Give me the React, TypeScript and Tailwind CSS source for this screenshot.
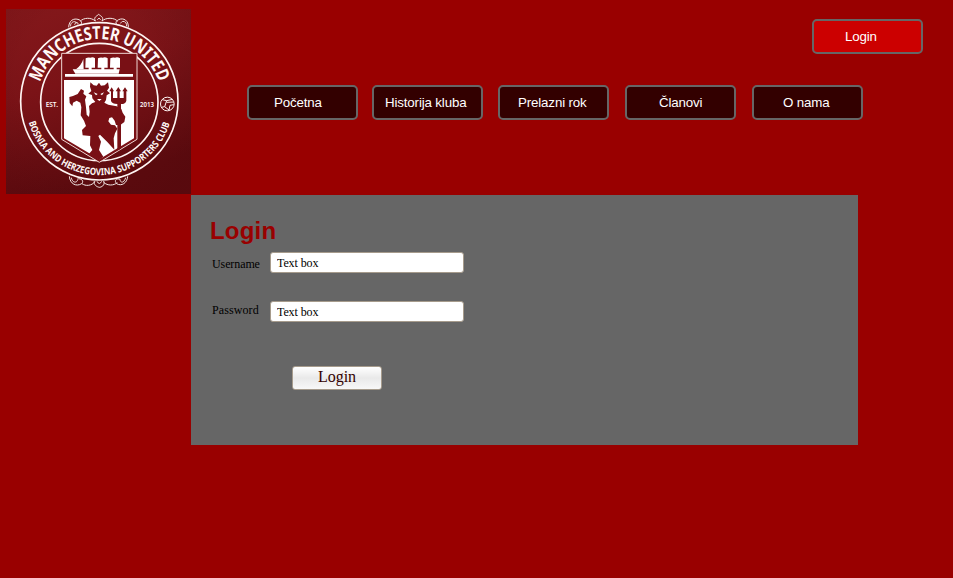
function Crest() {
  return (
    <svg viewBox="18 27 555 555" className="block h-[185px] w-[185px] shrink-0">
      <defs>
        <linearGradient id="maroon" x1="0" y1="0" x2="0.35" y2="1">
          <stop offset="0" stopColor="#84181b" />
          <stop offset="0.45" stopColor="#7b1317" />
          <stop offset="1" stopColor="#5e0b0f" />
        </linearGradient>
        <radialGradient id="edge" cx="0.45" cy="0.35" r="0.75">
          <stop offset="0.5" stopColor="#400307" stopOpacity="0" />
          <stop offset="1" stopColor="#400307" stopOpacity="0.2" />
        </radialGradient>
        <path id="upperArc" d="M120 247 A187 187 0 0 1 476 247" />
        <path id="lowerArc" d="M86 367 A221 221 0 0 0 510 367" />
      </defs>
      <rect x="18" y="27" width="555" height="555" fill="url(#maroon)" />
      <rect x="18" y="27" width="555" height="555" fill="url(#edge)" />
      <g fill="none" stroke="#f4e9e7" strokeWidth="3">
        <path d="M206 82 C207 62 220 53 237 59 C249 65 246 75 234 76 M212 79 C210 66 226 60 230 70 M224 74 C226 64 237 67 233 73 M240 64 C252 52 274 52 286 63 M286 63 C280 51 290 49 296 43 C303 49 312 51 306 63 M292 59 Q297 50 302 59 M306 63 C318 52 343 52 353 64 M385 82 C386 62 371 52 356 59 C343 65 347 76 359 75 M380 79 C382 66 367 58 362 70" />
        <path d="M208 529 C210 552 229 561 245 551 C253 543 244 534 232 537 M214 533 C217 549 231 550 233 539 M246 551 C256 559 275 558 285 545 M283 543 C280 554 290 561 299 562 C309 560 315 553 311 543 M291 544 Q298 557 305 544 M311 547 C323 558 341 557 352 548 M383 529 C382 549 364 560 350 551 C341 541 349 534 361 538 M377 533 C373 548 362 551 360 539" />
      </g>
      <circle cx="298" cy="304" r="236" fill="none" stroke="#fff5f3" strokeWidth="5" />
      <circle cx="298" cy="306" r="176" fill="none" stroke="#fff5f3" strokeWidth="5" />
      <g fill="#fff8f6" fontFamily="'Noto Sans', 'Open Sans', sans-serif">
        <text fontSize="54" fontWeight="700">
          <textPath href="#upperArc" textLength="470" lengthAdjust="spacingAndGlyphs">MANCHESTER UNITED</textPath>
        </text>
        <text fontSize="29" fontWeight="700">
          <textPath href="#lowerArc" textLength="564" lengthAdjust="spacingAndGlyphs">BOSNIA AND HERZEGOVINA SUPPORTERS CLUB</textPath>
        </text>
        <text x="137" y="321" fontSize="20" fontWeight="600" textLength="37" lengthAdjust="spacingAndGlyphs">EST.</text>
        <text x="420" y="321" fontSize="20" fontWeight="600" textLength="42" lengthAdjust="spacingAndGlyphs">2013</text>
      </g>
      <g fill="none" stroke="#fff5f3" strokeWidth="3">
        <circle cx="502" cy="312" r="20.5" />
        <path d="M487 299 L500 302 L518 298 M500 302 L494 320 L507 330 M494 320 L484 322 M500 307 L521 306 M507 330 L510 316 L521 314" />
      </g>
      <path d="M185 160 H411 V418 L298 487 L185 418 Z" fill="#791015" stroke="#efd6d3" strokeWidth="3" />
      <g fill="#fff">
        <path d="M195 222 H399 V230 H195 Z" />
        <path d="M218 208 H359 L356 221 H226 Z" />
        <path d="M250 177 L251 208 L228 208 Q244 196 250 177 Z" />
        <path d="M257 175 Q264 171 271 173 Q279 170 285 175 V203 H275 V210 H266 V203 H256 Z" />
        <path d="M294 175 Q301 171 308 173 Q316 170 323 175 V203 H313 V210 H304 V203 H293 Z" />
        <path d="M331 175 Q338 171 345 173 Q353 170 360 175 V203 H350 V210 H341 V203 H330 Z" />
        <path d="M192 240 H402 V415 L298 478 L192 415 Z" />
      </g>
      <g fill="#791015">
        <path d="M271 247 L281 256 L290 257 L297 248 L303 257 L314 256 L324 247 L327 263 L321 272 L330 280 L320 286 L318 300 L313 308 L325 314 L350 319 L364 327 L368 338 L376 350 L373 366 L361 375 L348 375 L344 362 L336 352 L328 354 L325 364 L333 374 L345 376 L352 386 L345 400 L341 415 L343 449 L322 426 L300 404 L295 408 L303 425 L297 450 L310 470 L298 479 L266 463 L277 450 L270 436 L271 408 L248 406 L246 390 L258 378 L252 362 L242 346 L244 322 L241 308 L230 302 L219 308 L217 319 L209 309 L208 291 L219 288 L233 282 L243 267 L252 272 L250 281 L259 289 L255 299 L258 322 L260 344 L267 351 L269 335 L267 318 L276 310 L286 306 L277 295 L276 285 L265 281 L274 273 L270 260 Z" />
        <path d="M335 262 L342 274 H339 V294 H352 V274 H347 L355 261 L363 274 H359 V294 H371 V274 H367 L375 262 L383 274 H379 V302 Q377 312 363 312 V446 L352 452 V312 Q336 312 333 303 V274 H328 Z" />
      </g>
      <g fill="#fff">
        <path d="M281 277 L293 282 L288 286 Z M312 277 L301 282 L306 286 Z M291 297 L305 297 L298 303 Z" />
      </g>
    </svg>
  );
}

const navItems = [
  { label: "Početna", box: "ml-0 pl-[25px]" },
  { label: "Historija kluba", box: "ml-[14px] pl-[11px]" },
  { label: "Prelazni rok", box: "ml-[15px] pl-[18px]" },
  { label: "Članovi", box: "ml-[16px] pl-[32px]" },
  { label: "O nama", box: "ml-[16px] pl-[29px]" },
];

function Field({ label, className, labelClass }: { label: string; className: string; labelClass: string }) {
  return (
    <label className={`flex h-[21px] font-['Liberation_Serif',serif] text-[12px] leading-[21px] text-black ${className}`}>
      <span className={`ml-[21px] w-[58px] ${labelClass}`}>{label}</span>
      <input
        defaultValue="Text box"
        className="h-[21px] w-[194px] rounded-[3px] border border-[#a69b8c] bg-white px-[6px] pt-[2px] text-[12px] tracking-[-0.1px] outline-none"
      />
    </label>
  );
}

export default function App() {
  return (
    <div className="h-[578px] w-[953px] overflow-hidden bg-[#990000] font-['Liberation_Sans',Arial,sans-serif]">
      <header className="flex h-[195px] pl-[6px] pt-[9px]">
        <Crest />
        <div className="flex flex-1 flex-col pt-[10px]">
          <button className="mr-[30px] flex h-[35px] w-[111px] items-center self-end rounded-[5px] border-2 border-[#666] bg-[#cc0000] pl-[31px] text-[13.33px] tracking-[-0.15px] text-white">
            Login
          </button>
          <nav className="ml-[56px] mt-[31px] flex">
            {navItems.map((item) => (
              <button
                key={item.label}
                className={`flex h-[35px] w-[111px] items-center whitespace-nowrap rounded-[5px] border-2 border-[#666] bg-[#330000] text-[13.33px] tracking-[-0.15px] text-white ${item.box}`}
              >
                {item.label}
              </button>
            ))}
          </nav>
        </div>
      </header>
      <main className="ml-[191px] flex h-[250px] w-[667px] flex-col bg-[#666] pt-[21px]">
        <h1 className="ml-[19px] h-[36px] text-[24px] font-bold leading-[30px] tracking-[0.2px] text-[#990000]">Login</h1>
        <Field label="Username" className="" labelClass="pt-[2px] tracking-[-0.1px]" />
        <Field label="Password" className="mt-[28px]" labelClass="-mt-px tracking-[0.1px]" />
        <button className="ml-[101px] mt-[44px] h-[24px] w-[90px] rounded-[3px] border border-[#a69b8c] bg-linear-to-b from-white via-[#e9e9e9] to-[#f8f8f8] pb-[2px] font-['Liberation_Serif',serif] text-[16px] leading-[20px] text-[#330000]">
          Login
        </button>
      </main>
    </div>
  );
}
